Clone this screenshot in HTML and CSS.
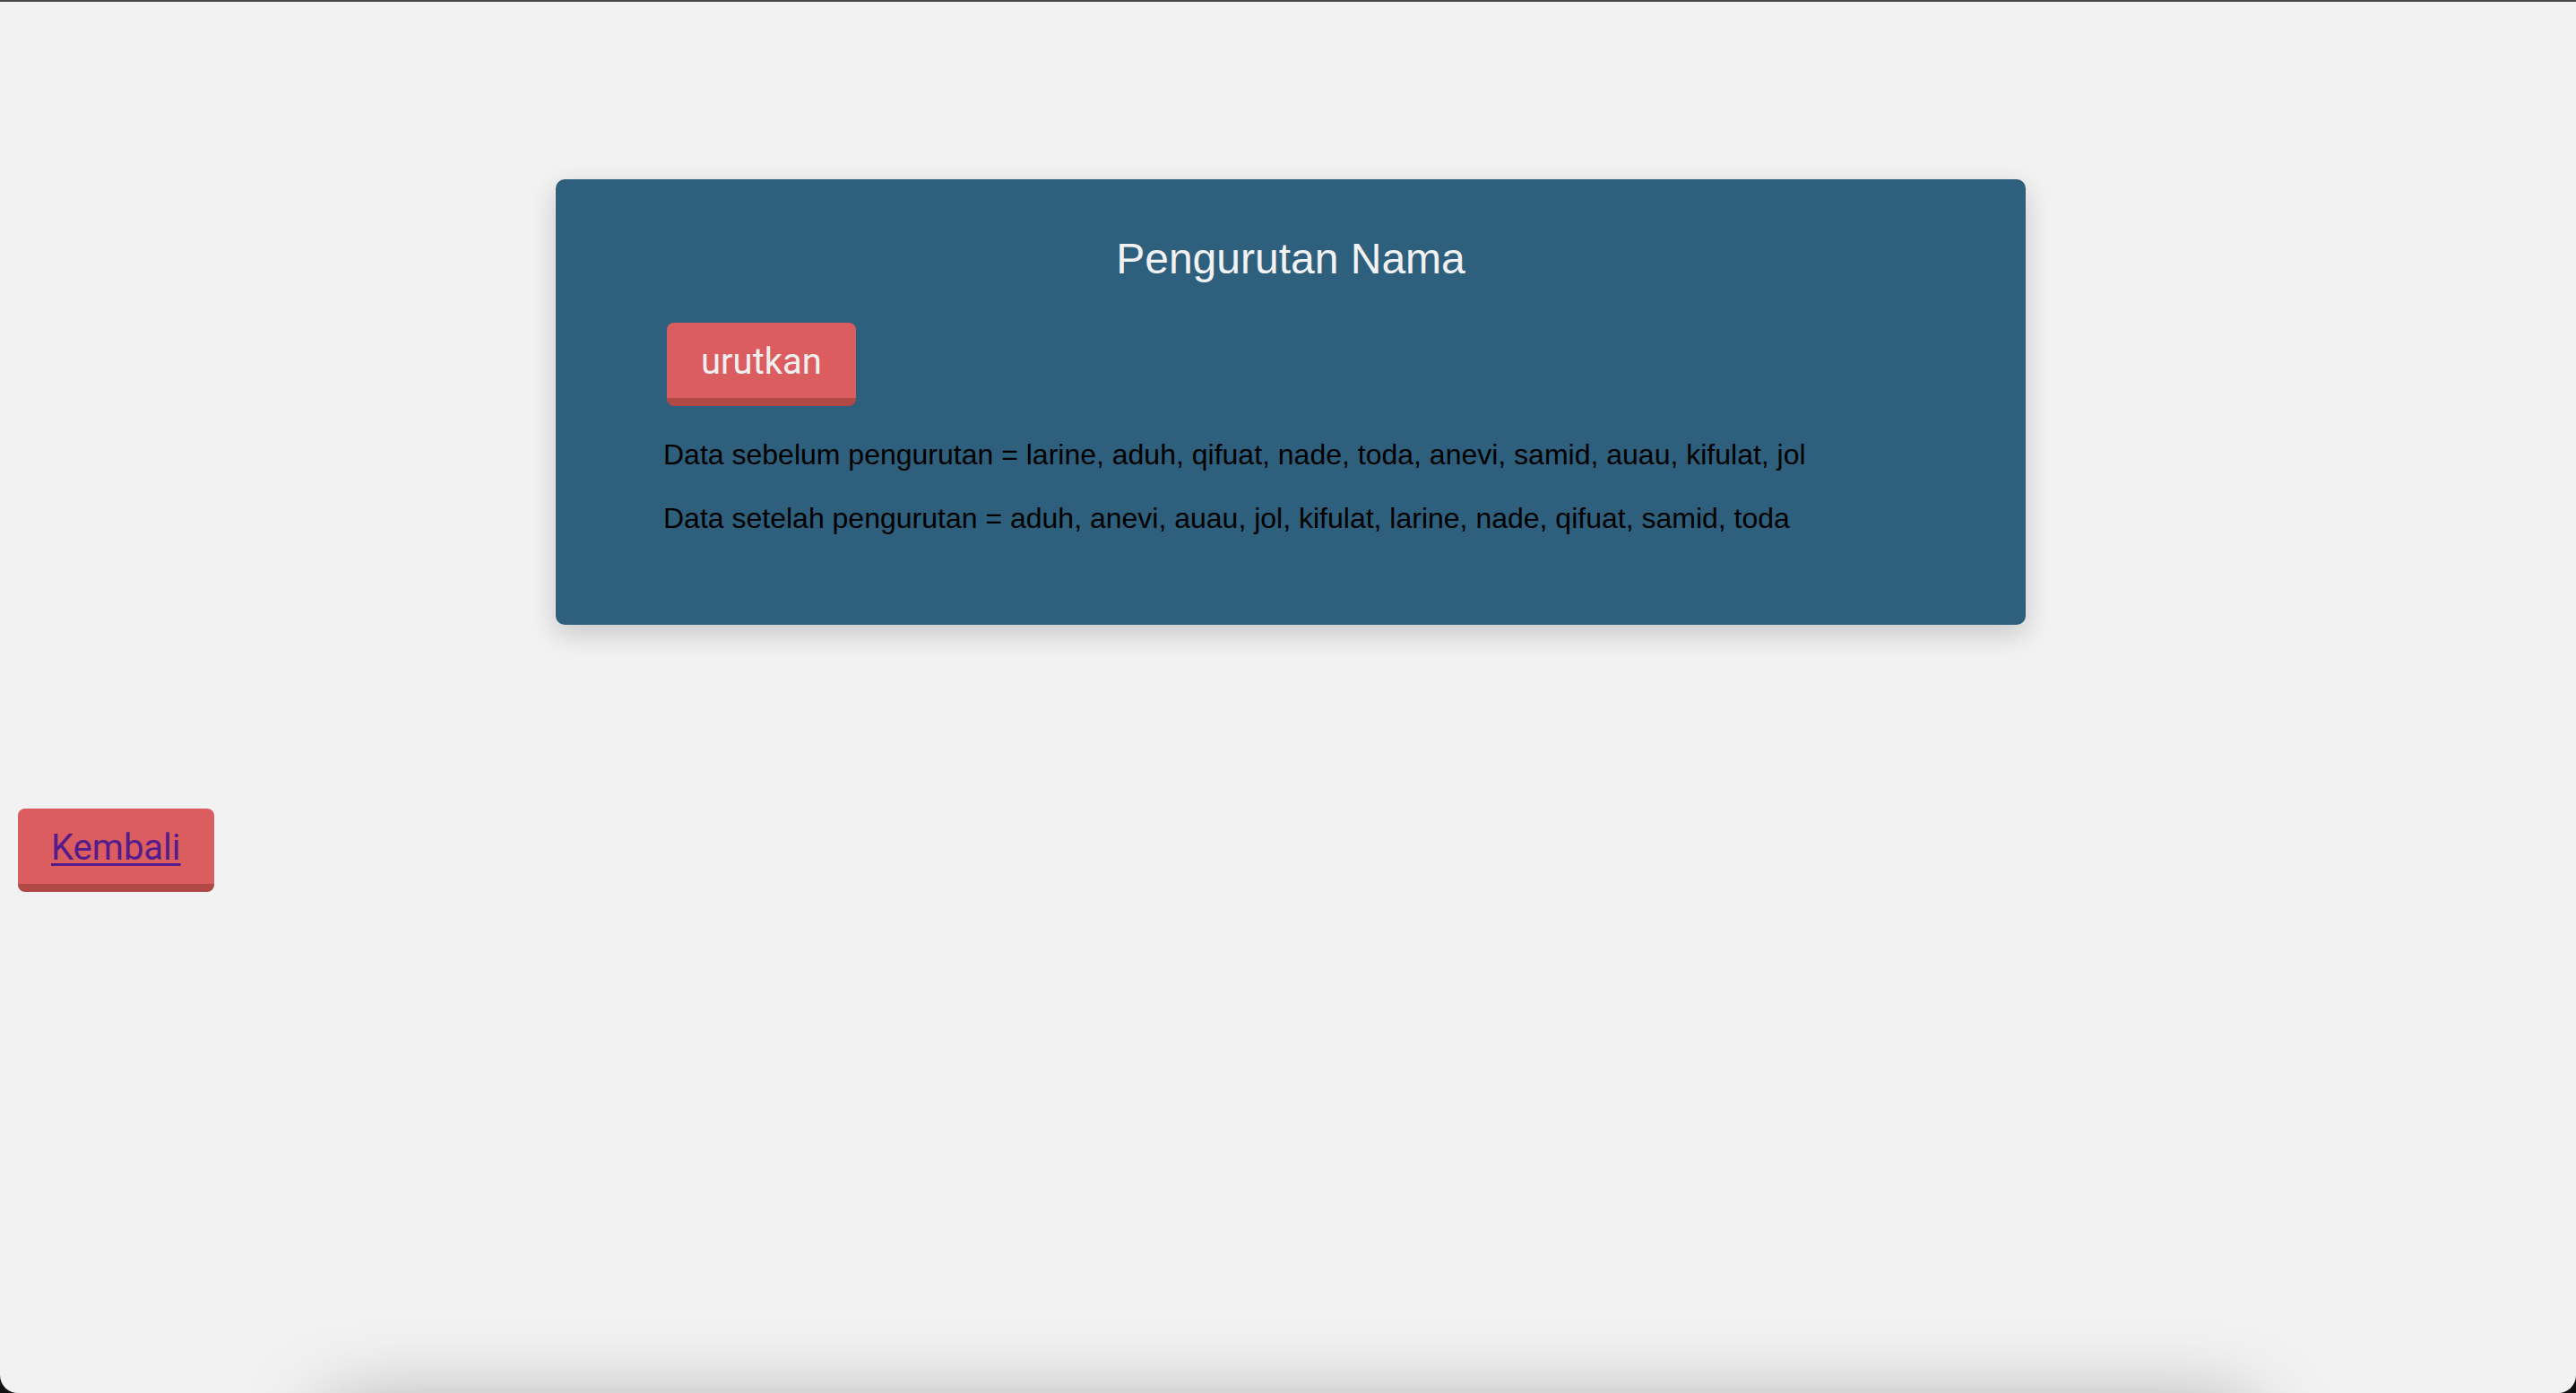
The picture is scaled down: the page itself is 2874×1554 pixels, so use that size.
FILE: index.html
```html
<!DOCTYPE html>
<html lang="id">
<head>
<meta charset="utf-8">
<title>Pengurutan Nama</title>
<link rel="stylesheet" href="styles.css">
</head>
<body>
<div class="window">
  <div class="card">
    <h2 class="card-title">Pengurutan Nama</h2>
    <button class="btn btn-sort" type="button">urutkan</button>
    <p class="data-line data-first">Data sebelum pengurutan = larine, aduh, qifuat, nade, toda, anevi, samid, auau, kifulat, jol</p>
    <p class="data-line">Data setelah pengurutan = aduh, anevi, auau, jol, kifulat, larine, nade, qifuat, samid, toda</p>
  </div>
  <div class="back-row">
    <button class="btn btn-back" type="button"><a class="back-link" href="#">Kembali</a></button>
  </div>
  <div class="below-fold"></div>
</div>
</body>
</html>
```
FILE: styles.css
```css
html {
  background: #111;
}
body {
  margin: 0;
  background: #111;
}
.window {
  height: 1554px;
  box-sizing: border-box;
  overflow: hidden;
  background: #f2f2f2;
  border-top: 2px solid #4a4a4a;
  border-radius: 0 0 20px 20px;
  display: flex;
  flex-direction: column;
  align-items: flex-start;
}
.card {
  align-self: center;
  margin: 198px 0 0 6px;
  width: 1640px;
  box-sizing: border-box;
  padding: 61px 120px 100px;
  background: #2e5f7d;
  border-radius: 10px;
  box-shadow: 0 10px 30px rgba(0, 0, 0, 0.18);
  display: flex;
  flex-direction: column;
  align-items: flex-start;
}
.card-title {
  align-self: stretch;
  margin: 0;
  text-align: center;
  font-family: "Liberation Sans", Arial, sans-serif;
  font-weight: normal;
  font-size: 48px;
  line-height: 55px;
  color: #f2f2f2;
}
.btn {
  font-family: Roboto, "Noto Sans", sans-serif;
  font-size: 40px;
  line-height: 46px;
  padding: 21px 38px 17px;
  border: none;
  border-bottom: 9px solid #b04845;
  border-radius: 8px;
  background: #db5d5f;
  color: #f0f0f0;
  cursor: pointer;
}
.btn-sort {
  margin: 44px 0 0 4px;
}
.btn-back {
  padding-left: 37px;
  padding-right: 37px;
}
.data-line {
  margin: 34px 0 0;
  font-family: "Liberation Sans", Arial, sans-serif;
  font-size: 32px;
  line-height: 37px;
  color: #000;
}
.data-first {
  margin-top: 36px;
}
.back-row {
  margin: 205px 0 0 20px;
}
.back-link {
  color: #551a8b;
  text-decoration: underline;
  text-decoration-thickness: 3px;
  text-underline-offset: 4px;
}
.below-fold {
  align-self: center;
  flex: none;
  width: 2142px;
  height: 400px;
  margin-top: 584px;
  background: #f2f2f2;
  box-shadow: 0 0 90px rgba(0, 0, 0, 0.4);
}
```
